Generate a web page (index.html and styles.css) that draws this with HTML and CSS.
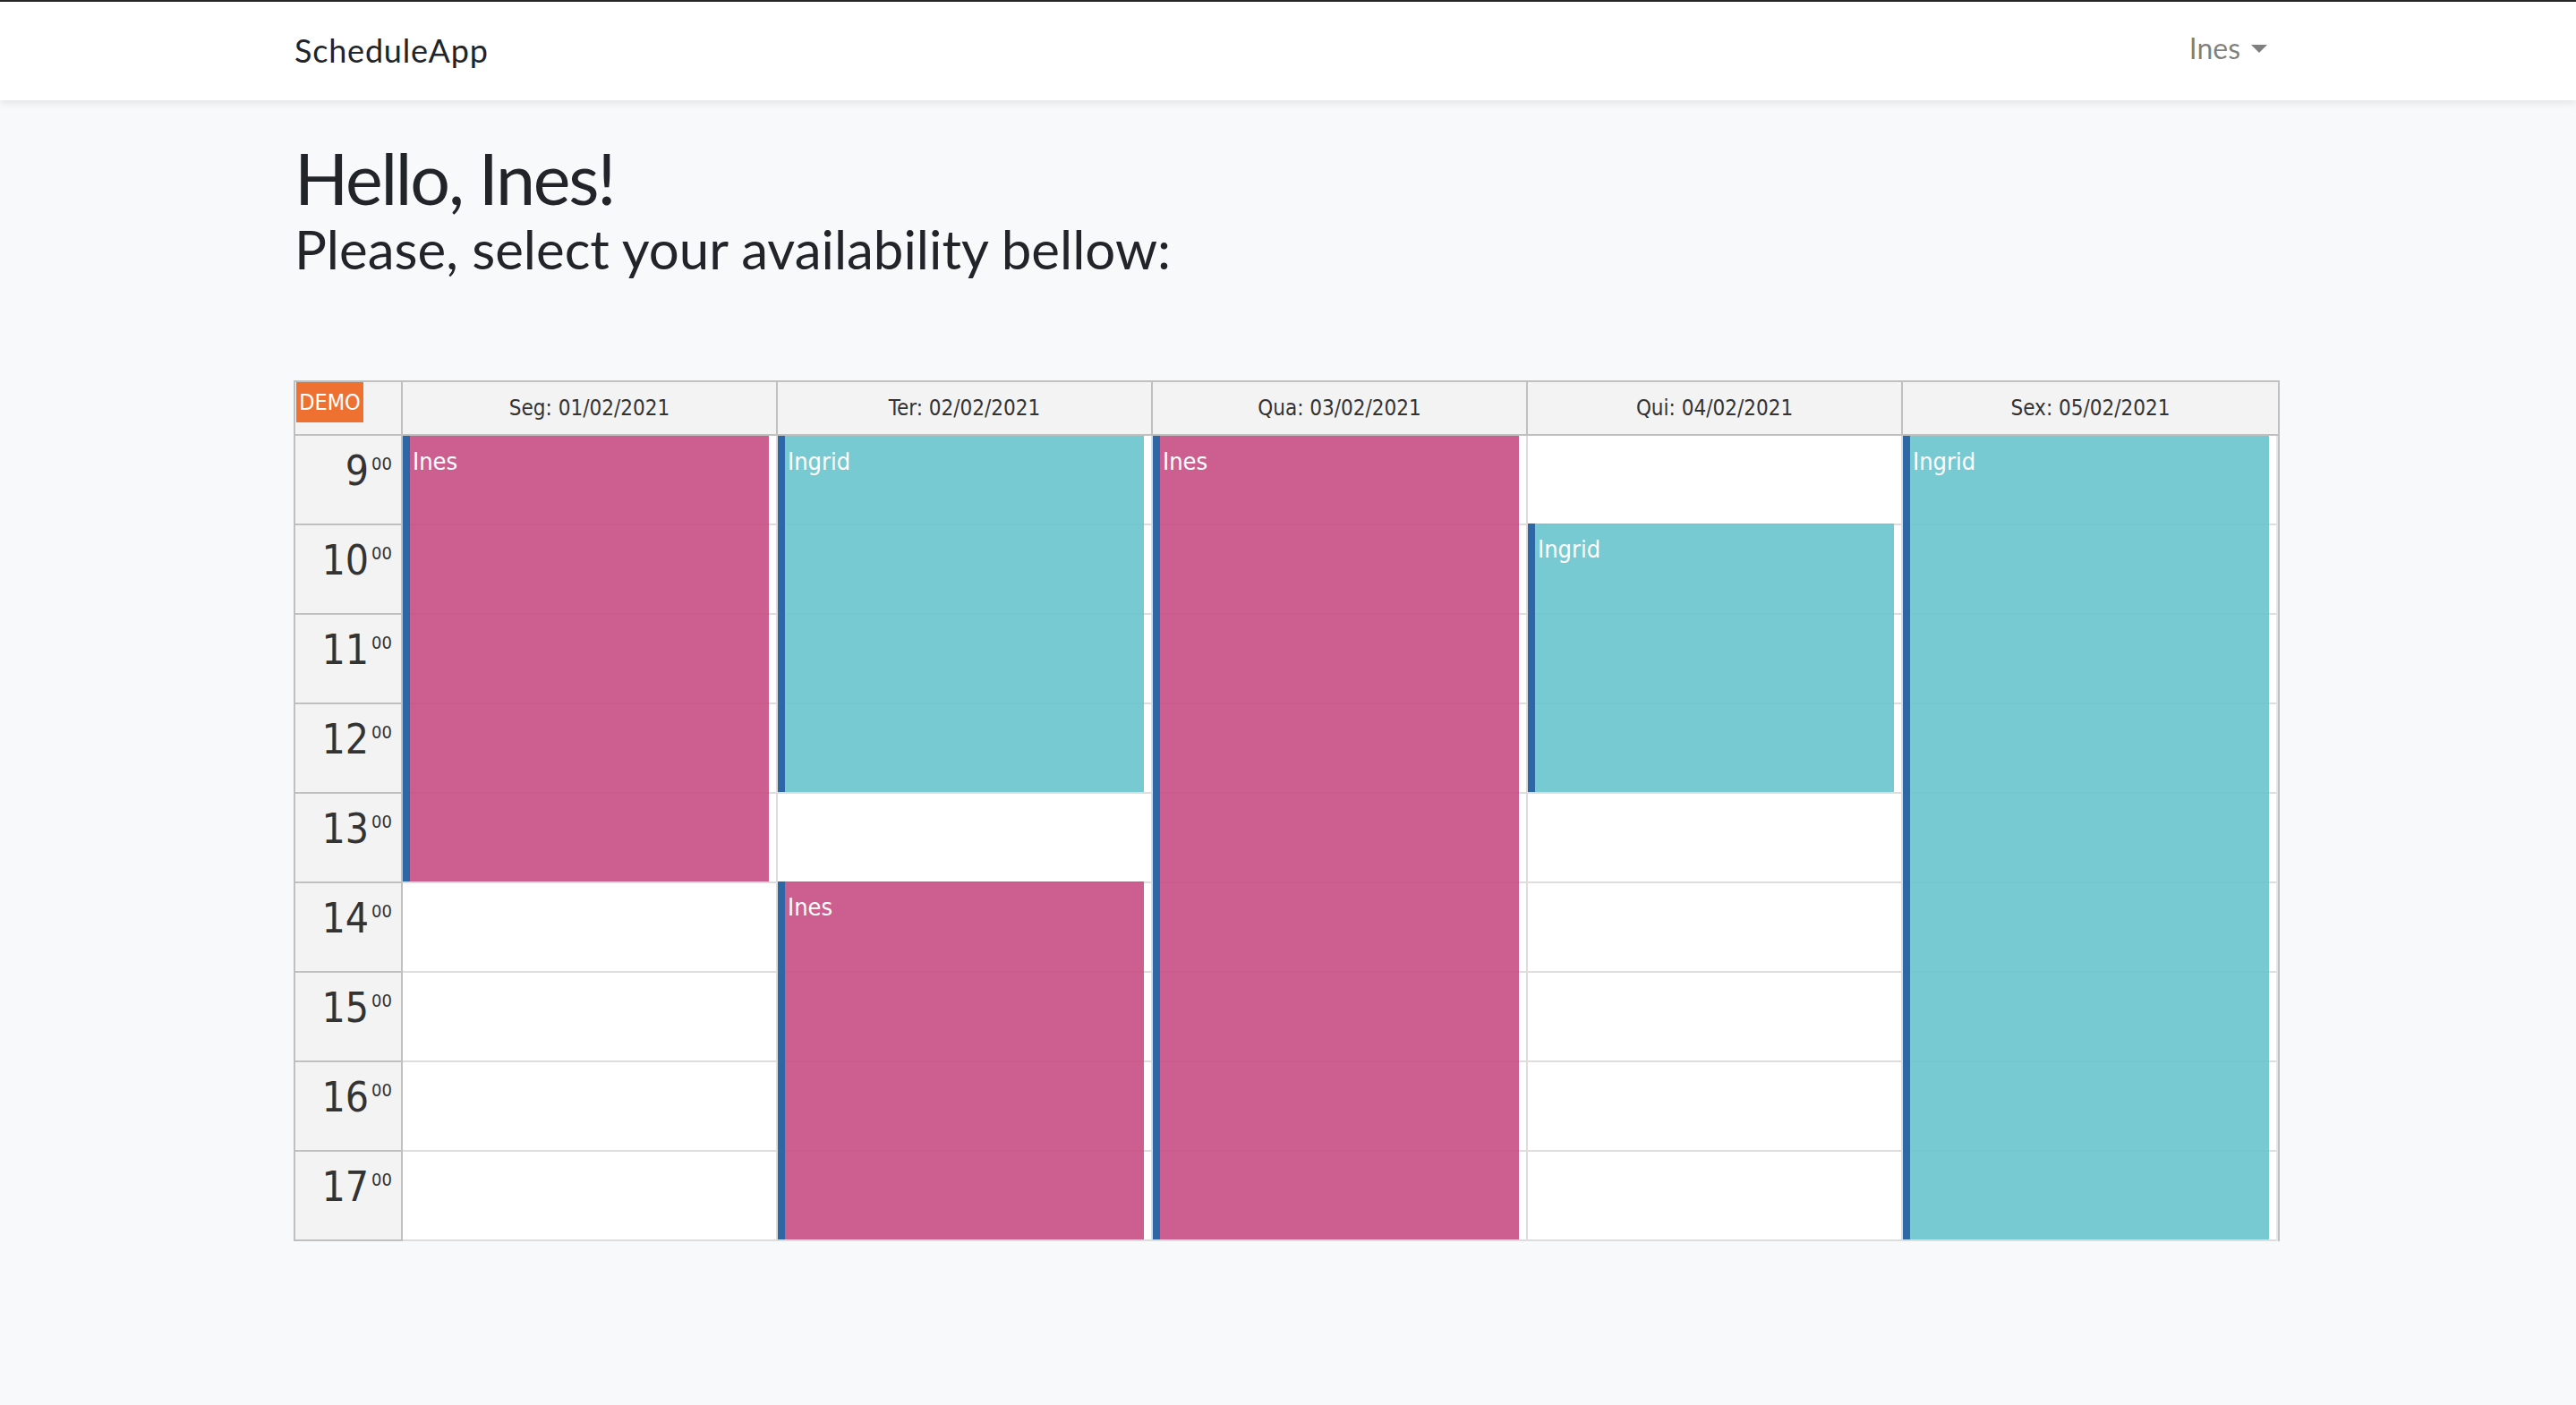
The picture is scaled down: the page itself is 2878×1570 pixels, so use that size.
FILE: index.html
```html
<!DOCTYPE html>
<html lang="pt">
<head>
<meta charset="utf-8">
<title>ScheduleApp</title>
<link rel="stylesheet" href="styles.css">
</head>
<body>
<nav class="navbar">
  <div class="container nav-inner">
    <a class="brand" href="#">ScheduleApp</a>
    <a class="user" href="#">Ines<span class="caret"></span></a>
  </div>
</nav>
<main class="container main">
  <h1 class="title">Hello, Ines!</h1>
  <h3 class="subtitle">Please, select your availability bellow:</h3>

  <div class="calendar">
    <div class="cal-head">
      <div class="corner"><span class="demo">DEMO</span></div>
      <div class="day-head">Seg: 01/02/2021</div>
      <div class="day-head">Ter: 02/02/2021</div>
      <div class="day-head">Qua: 03/02/2021</div>
      <div class="day-head">Qui: 04/02/2021</div>
      <div class="day-head last">Sex: 05/02/2021</div>
    </div>
    <div class="cal-body">
      <div class="row-heads">
        <div class="hour"><span class="h">9</span><span class="m">00</span></div>
        <div class="hour"><span class="h">10</span><span class="m">00</span></div>
        <div class="hour"><span class="h">11</span><span class="m">00</span></div>
        <div class="hour"><span class="h">12</span><span class="m">00</span></div>
        <div class="hour"><span class="h">13</span><span class="m">00</span></div>
        <div class="hour"><span class="h">14</span><span class="m">00</span></div>
        <div class="hour"><span class="h">15</span><span class="m">00</span></div>
        <div class="hour"><span class="h">16</span><span class="m">00</span></div>
        <div class="hour"><span class="h">17</span><span class="m">00</span></div>
      </div>

      <div class="day">
        <div class="cell"></div><div class="cell"></div><div class="cell"></div>
        <div class="cell"></div><div class="cell"></div><div class="cell"></div>
        <div class="cell"></div><div class="cell"></div><div class="cell"></div>
        <div class="ev ev-pink" style="top:0;height:498px">Ines</div>
      </div>

      <div class="day">
        <div class="cell"></div><div class="cell"></div><div class="cell"></div>
        <div class="cell"></div><div class="cell"></div><div class="cell"></div>
        <div class="cell"></div><div class="cell"></div><div class="cell"></div>
        <div class="ev ev-teal" style="top:0;height:398px">Ingrid</div>
        <div class="ev ev-pink" style="top:498px;height:400px">Ines</div>
      </div>

      <div class="day">
        <div class="cell"></div><div class="cell"></div><div class="cell"></div>
        <div class="cell"></div><div class="cell"></div><div class="cell"></div>
        <div class="cell"></div><div class="cell"></div><div class="cell"></div>
        <div class="ev ev-pink" style="top:0;height:898px">Ines</div>
      </div>

      <div class="day">
        <div class="cell"></div><div class="cell"></div><div class="cell"></div>
        <div class="cell"></div><div class="cell"></div><div class="cell"></div>
        <div class="cell"></div><div class="cell"></div><div class="cell"></div>
        <div class="ev ev-teal" style="top:98px;height:300px">Ingrid</div>
      </div>

      <div class="day last">
        <div class="cell"></div><div class="cell"></div><div class="cell"></div>
        <div class="cell"></div><div class="cell"></div><div class="cell"></div>
        <div class="cell"></div><div class="cell"></div><div class="cell"></div>
        <div class="ev ev-teal" style="top:0;height:898px">Ingrid</div>
      </div>
    </div>
  </div>
</main>
</body>
</html>
```

FILE: styles.css
```css
* { box-sizing: border-box; }

html, body {
  margin: 0;
  padding: 0;
}

body {
  background: #f8f9fa;
  color: #212529;
  font-family: Lato, "Open Sans", sans-serif;
  min-height: 1570px;
}

.container {
  width: 2280px;
  margin: 0 auto;
  padding: 0 30px;
}

/* Navbar */
.navbar {
  background: #ffffff;
  border-top: 2px solid #262626;
  height: 112px;
  box-shadow: 0 4px 8px rgba(0, 0, 0, 0.075);
  position: relative;
}

.nav-inner {
  height: 110px;
  display: flex;
  align-items: center;
  justify-content: space-between;
}

.brand {
  font-size: 36px;
  line-height: 1.2;
  color: #212529;
  text-decoration: none;
  letter-spacing: 0.8px;
}

.user {
  font-size: 32px;
  line-height: 1.2;
  color: rgba(0, 0, 0, 0.5);
  text-decoration: none;
  padding-right: 16px;
  margin-bottom: 6px;
  display: flex;
  align-items: center;
}

.caret {
  display: inline-block;
  width: 0;
  height: 0;
  margin-left: 12px;
  margin-top: 2px;
  border-top: 9px solid rgba(0, 0, 0, 0.5);
  border-left: 9px solid transparent;
  border-right: 9px solid transparent;
}

/* Headings */
.main {
  padding-top: 40px;
}

.title {
  margin: 0;
  font-size: 79px;
  line-height: 1.2;
  font-weight: 400;
  letter-spacing: -2.2px;
}

.subtitle {
  margin: -5px 0 0 0;
  font-size: 60px;
  line-height: 1.2;
  font-weight: 400;
  letter-spacing: 0;
}

/* Calendar */
.calendar {
  margin-top: 111px;
  margin-left: -1px;
  width: 2219px;
  border: 2px solid #c0c0c0;
  border-bottom: none;
  font-family: "Liberation Sans Narrow", "DejaVu Sans Condensed", "Liberation Sans", sans-serif;
  color: #333333;
  background: #ffffff;
}

.cal-head,
.cal-body {
  display: grid;
  grid-template-columns: 120px repeat(5, 419px);
}

.cal-head {
  height: 60px;
  background: #f3f3f3;
  border-bottom: 2px solid #c0c0c0;
}

.corner {
  position: relative;
  border-right: 2px solid #c0c0c0;
}

.demo {
  position: absolute;
  left: 1px;
  top: 0;
  width: 75px;
  height: 45px;
  background: #ef7131;
  color: #ffffff;
  font-size: 25px;
  line-height: 45px;
  text-align: center;
}

.day-head {
  border-right: 2px solid #c0c0c0;
  font-size: 24px;
  line-height: 58px;
  text-align: center;
}

.day-head.last {
  border-right: none;
}

.row-heads {
  background: #f3f3f3;
  border-right: 2px solid #c0c0c0;
}

.hour {
  height: 100px;
  border-bottom: 2px solid #c0c0c0;
  display: flex;
  justify-content: flex-end;
  align-items: flex-start;
  padding: 16px 10px 0 0;
}

.hour .h {
  font-size: 46px;
  line-height: 46px;
}

.hour .m {
  font-size: 20px;
  line-height: 20px;
  margin-top: 5px;
  margin-left: 3px;
}

.day {
  position: relative;
  border-right: 2px solid #dddddd;
}

.day.last {
  border-right: 2px solid #e6e6e6;
}

.cell {
  height: 100px;
  border-bottom: 2px solid #dddddd;
}

.ev {
  position: absolute;
  left: 0;
  right: 8px;
  color: #ffffff;
  font-size: 27px;
  line-height: 30px;
  padding: 14px 0 0 11px;
  overflow: hidden;
}

.ev::before {
  content: "";
  position: absolute;
  left: 0;
  top: 0;
  bottom: 0;
  width: 8px;
  background: #2e66a6;
}

.ev-pink {
  background: rgba(198, 78, 131, 0.9);
}

.ev-teal {
  background: rgba(105, 196, 205, 0.9);
}
```
